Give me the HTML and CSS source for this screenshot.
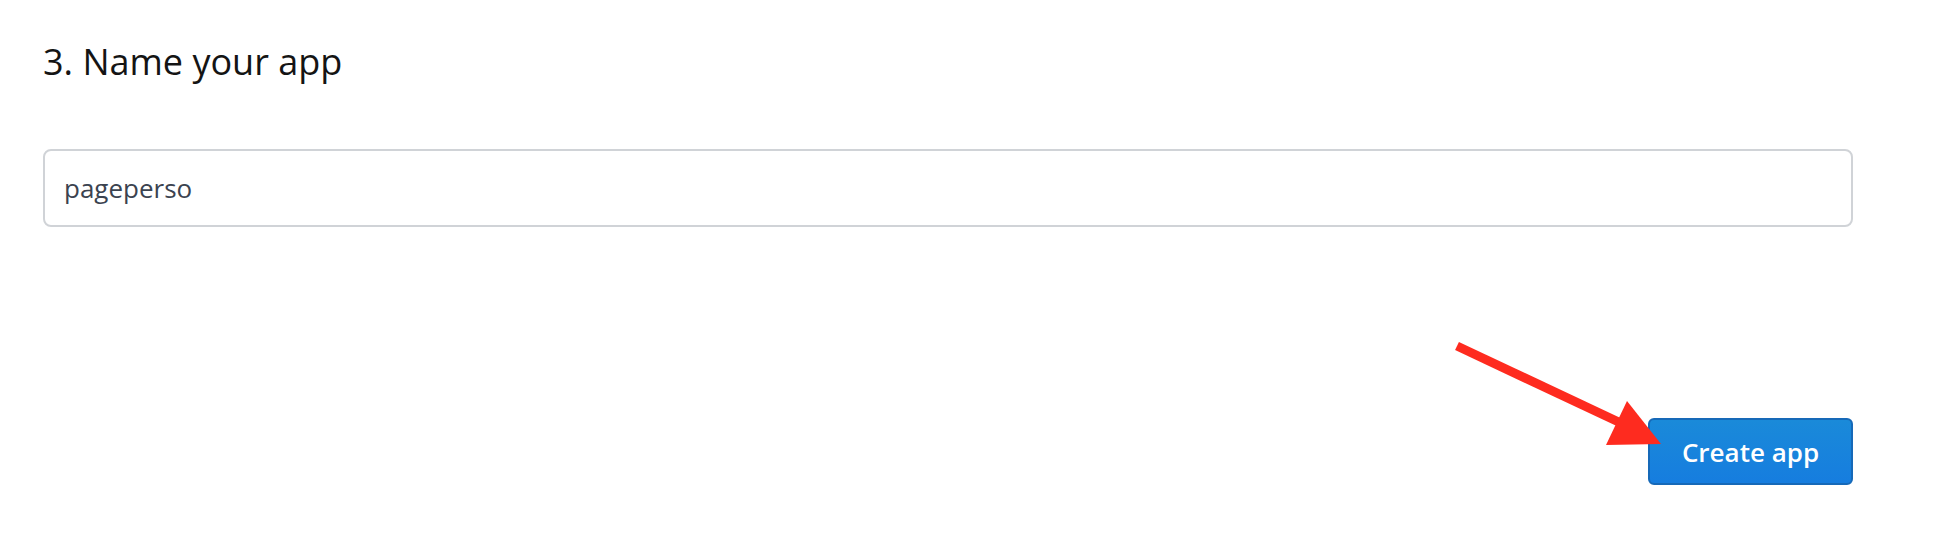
FILE: index.html
```html
<!DOCTYPE html>
<html lang="en">
<head>
<meta charset="utf-8">
<title>Name your app</title>
<link rel="stylesheet" href="styles.css">
</head>
<body>
<main class="page">
  <h2 class="step-title">3. Name your app</h2>
  <div class="field">
    <input class="text-input" type="text" value="pageperso">
  </div>
  <div class="actions">
    <button class="btn-primary" type="button">Create app</button>
    <svg class="annotation-arrow" width="230" height="120" viewBox="0 0 230 120" aria-hidden="true">
      <line x1="4" y1="8" x2="172" y2="87" stroke="#fe2b1f" stroke-width="9"/>
      <polygon points="174,63 153,107 208,106" fill="#fe2b1f"/>
    </svg>
  </div>
</main>
</body>
</html>
```

FILE: styles.css
```css
html, body {
  margin: 0;
  padding: 0;
  background: #ffffff;
}

body {
  font-family: "Open Sans", "Liberation Sans", sans-serif;
}

.page {
  width: 1810px;
  margin-left: 43px;
  padding-top: 37px;
}

.step-title {
  margin: 0;
  font-size: 36px;
  font-weight: 400;
  line-height: 49px;
  color: #141414;
}

.field {
  margin-top: 63px;
}

.text-input {
  display: block;
  box-sizing: border-box;
  width: 100%;
  height: 78px;
  padding: 0 19px;
  border: 2px solid #d0d3d7;
  border-radius: 8px;
  background: #ffffff;
  font-family: "Open Sans", "Liberation Sans", sans-serif;
  font-size: 26px;
  color: #3b4350;
  outline: none;
}

.actions {
  position: relative;
  display: flex;
  justify-content: flex-end;
  margin-top: 191px;
}

.btn-primary {
  box-sizing: border-box;
  width: 205px;
  height: 67px;
  border: 2px solid #1669b8;
  border-radius: 6px;
  background: linear-gradient(#1a8ad9, #167ddf);
  color: #ffffff;
  font-family: "Open Sans", "Liberation Sans", sans-serif;
  font-size: 26px;
  font-weight: 600;
  padding: 0;
  cursor: pointer;
}

.annotation-arrow {
  position: absolute;
  left: 1410px;
  top: -80px;
}
```
